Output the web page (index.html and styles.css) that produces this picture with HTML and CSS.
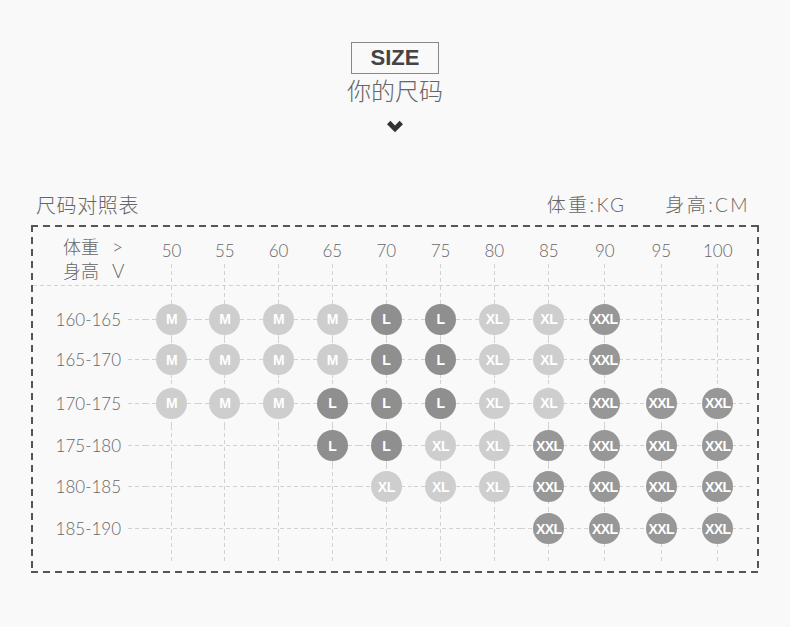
FILE: index.html
```html
<!DOCTYPE html>
<html lang="zh">
<head>
<meta charset="utf-8">
<title>SIZE 你的尺码</title>
<link rel="stylesheet" href="styles.css">
</head>
<body>
<header class="hero">
  <div class="size-box">SIZE</div>
  <div class="subtitle">你的尺码</div>
  <svg class="chevron" width="16" height="13" viewBox="0 0 16 13"><polygon points="0,4.2 3.4,0.8 8,5.4 12.6,0.8 16,4.2 8,12.2" fill="#333"/></svg>
</header>

<section class="chart">
  <div class="chart-head">
    <div class="chart-title">尺码对照表</div>
    <div class="units"><span>体重:KG</span><span>身高:CM</span></div>
  </div>
  <div class="table">
    <div class="grid thead">
      <div class="corner">
        <div class="corner-line"><span class="zh">体重</span><span class="sym">&gt;</span></div>
        <div class="corner-line"><span class="zh">身高</span><span class="sym">V</span></div>
      </div>
      <div class="hcell">50</div>
      <div class="hcell">55</div>
      <div class="hcell">60</div>
      <div class="hcell">65</div>
      <div class="hcell">70</div>
      <div class="hcell">75</div>
      <div class="hcell">80</div>
      <div class="hcell">85</div>
      <div class="hcell">90</div>
      <div class="hcell">95</div>
      <div class="hcell">100</div>
      <div></div>
    </div>

    <div class="grid row r1">
      <div class="label">160-165</div>
      <div class="cell"><span class="dot lt">M</span></div>
      <div class="cell"><span class="dot lt">M</span></div>
      <div class="cell"><span class="dot lt">M</span></div>
      <div class="cell"><span class="dot lt">M</span></div>
      <div class="cell"><span class="dot dk">L</span></div>
      <div class="cell"><span class="dot dk">L</span></div>
      <div class="cell"><span class="dot lt">XL</span></div>
      <div class="cell"><span class="dot lt">XL</span></div>
      <div class="cell"><span class="dot dx">XXL</span></div>
      <div class="cell"></div>
      <div class="cell"></div>
      <div class="tail"></div>
    </div>

    <div class="grid row r2">
      <div class="label">165-170</div>
      <div class="cell"><span class="dot lt">M</span></div>
      <div class="cell"><span class="dot lt">M</span></div>
      <div class="cell"><span class="dot lt">M</span></div>
      <div class="cell"><span class="dot lt">M</span></div>
      <div class="cell"><span class="dot dk">L</span></div>
      <div class="cell"><span class="dot dk">L</span></div>
      <div class="cell"><span class="dot lt">XL</span></div>
      <div class="cell"><span class="dot lt">XL</span></div>
      <div class="cell"><span class="dot dx">XXL</span></div>
      <div class="cell"></div>
      <div class="cell"></div>
      <div class="tail"></div>
    </div>

    <div class="grid row r3">
      <div class="label">170-175</div>
      <div class="cell"><span class="dot lt">M</span></div>
      <div class="cell"><span class="dot lt">M</span></div>
      <div class="cell"><span class="dot lt">M</span></div>
      <div class="cell"><span class="dot dk">L</span></div>
      <div class="cell"><span class="dot dk">L</span></div>
      <div class="cell"><span class="dot dk">L</span></div>
      <div class="cell"><span class="dot lt">XL</span></div>
      <div class="cell"><span class="dot lt">XL</span></div>
      <div class="cell"><span class="dot dx">XXL</span></div>
      <div class="cell"><span class="dot dx">XXL</span></div>
      <div class="cell"><span class="dot dx">XXL</span></div>
      <div class="tail"></div>
    </div>

    <div class="grid row r4">
      <div class="label">175-180</div>
      <div class="cell"></div>
      <div class="cell"></div>
      <div class="cell"></div>
      <div class="cell"><span class="dot dk">L</span></div>
      <div class="cell"><span class="dot dk">L</span></div>
      <div class="cell"><span class="dot lt">XL</span></div>
      <div class="cell"><span class="dot lt">XL</span></div>
      <div class="cell"><span class="dot dx">XXL</span></div>
      <div class="cell"><span class="dot dx">XXL</span></div>
      <div class="cell"><span class="dot dx">XXL</span></div>
      <div class="cell"><span class="dot dx">XXL</span></div>
      <div class="tail"></div>
    </div>

    <div class="grid row r5">
      <div class="label">180-185</div>
      <div class="cell"></div>
      <div class="cell"></div>
      <div class="cell"></div>
      <div class="cell"></div>
      <div class="cell"><span class="dot lt">XL</span></div>
      <div class="cell"><span class="dot lt">XL</span></div>
      <div class="cell"><span class="dot lt">XL</span></div>
      <div class="cell"><span class="dot dx">XXL</span></div>
      <div class="cell"><span class="dot dx">XXL</span></div>
      <div class="cell"><span class="dot dx">XXL</span></div>
      <div class="cell"><span class="dot dx">XXL</span></div>
      <div class="tail"></div>
    </div>

    <div class="grid row r6">
      <div class="label">185-190</div>
      <div class="cell"></div>
      <div class="cell"></div>
      <div class="cell"></div>
      <div class="cell"></div>
      <div class="cell"></div>
      <div class="cell"></div>
      <div class="cell"></div>
      <div class="cell"><span class="dot dx">XXL</span></div>
      <div class="cell"><span class="dot dx">XXL</span></div>
      <div class="cell"><span class="dot dx">XXL</span></div>
      <div class="cell"><span class="dot dx">XXL</span></div>
      <div class="tail"></div>
    </div>
  </div>
</section>
</body>
</html>
```

FILE: styles.css
```css
* { box-sizing: border-box; }

body {
  margin: 0;
  background: #f9f9f9;
  color: #666;
  font-family: "Lato", "Noto Sans CJK SC", sans-serif;
  font-weight: 300;
}

.hero {
  display: flex;
  flex-direction: column;
  align-items: center;
  padding-top: 42px;
}

.size-box {
  width: 88px;
  height: 32px;
  border: 1px solid #888;
  font-family: "Liberation Sans", Arial, sans-serif;
  font-weight: 700;
  font-size: 22px;
  line-height: 30px;
  color: #444;
  text-align: center;
}

.subtitle {
  margin-top: 1px;
  font-family: "Noto Sans CJK SC", sans-serif;
  font-size: 24px;
  line-height: 30px;
  color: #666;
}

.chevron {
  display: block;
  margin-top: 15px;
}

.chart {
  width: 728px;
  margin: 60px 0 0 31px;
}

.chart-head {
  display: flex;
  justify-content: space-between;
  align-items: flex-end;
  height: 24px;
  margin-bottom: 8px;
  font-size: 19px;
  line-height: 24px;
  color: #666;
}

.chart-title {
  padding-left: 5px;
  font-size: 20px;
  letter-spacing: 0.6px;
}

.units {
  display: flex;
  gap: 39px;
  padding-right: 9px;
  letter-spacing: 2.4px;
}

.table {
  padding: 2px 2px 11px;
  background:
    repeating-linear-gradient(to right, #555 0 7px, transparent 7px 12px) left top / 100% 2px no-repeat,
    repeating-linear-gradient(to right, #555 0 7px, transparent 7px 12px) left bottom / 100% 2px no-repeat,
    repeating-linear-gradient(to bottom, #555 0 7px, transparent 7px 12px) left top / 2px 100% no-repeat,
    repeating-linear-gradient(to bottom, #555 0 7px, transparent 7px 12px) right top / 2px 100% no-repeat;
}

.grid {
  display: grid;
  grid-template-columns: 112px 53px 53.5px 54px 53.5px 54.5px 54px 53.5px 55.5px 56.5px 56.5px 56.5px 11px;
}

.thead {
  height: 59px;
  background: repeating-linear-gradient(to right, #d2d2d2 0 4px, transparent 4px 7px) left bottom / 100% 1px no-repeat;
}

.corner {
  padding: 8px 0 0 30px;
  font-size: 18px;
  line-height: 24px;
}

.corner-line { display: flex; }
.corner-line .zh { width: 49px; }
.corner-line .sym { font-size: 19px; font-weight: 300; }

.hcell {
  padding-top: 14px;
  font-size: 17px;
  line-height: 20px;
  text-align: center;
  color: #666;
  background: repeating-linear-gradient(to bottom, #d2d2d2 0 4px, transparent 4px 7px) center bottom / 1px 22px no-repeat;
}

.r1 { height: 53px; }
.r2 { height: 41px; }
.r3 { height: 46px; }
.r4 { height: 39px; }
.r5 { height: 43px; }
.r6 { height: 54px; }

.r1 .cell, .r1 .label, .r1 .tail { padding-top: 13px; }
.r6 .cell, .r6 .label, .r6 .tail { padding-bottom: 13px; }

.label {
  display: flex;
  align-items: center;
  justify-content: flex-end;
  font-size: 17px;
  color: #666;
}

.label::after {
  content: "";
  width: 17px;
  height: 1px;
  margin-left: 7px;
  background: repeating-linear-gradient(to right, #d2d2d2 0 4px, transparent 4px 7px);
}

.cell {
  display: flex;
  align-items: center;
  justify-content: center;
  background-image:
    repeating-linear-gradient(to right, #d2d2d2 0 4px, transparent 4px 7px),
    repeating-linear-gradient(to bottom, #d2d2d2 0 4px, transparent 4px 7px);
  background-size: 100% 1px, 1px 100%;
  background-position: center, center;
  background-repeat: no-repeat;
  background-origin: content-box, padding-box;
}

.tail {
  background-image: repeating-linear-gradient(to right, #d2d2d2 0 4px, transparent 4px 7px);
  background-size: 7px 1px;
  background-position: left center;
  background-repeat: no-repeat;
  background-origin: content-box;
}

.dot {
  width: 31px;
  height: 31px;
  border-radius: 50%;
  display: flex;
  align-items: center;
  justify-content: center;
  color: #fff;
  font-family: "Liberation Sans Narrow", "Liberation Sans", Arial, sans-serif;
  font-weight: 700;
  font-size: 14px;
  letter-spacing: -0.5px;
}

.lt { background: #cecece; }
.dk { background: #8f8f8f; }
.dx { background: #979797; }
```
